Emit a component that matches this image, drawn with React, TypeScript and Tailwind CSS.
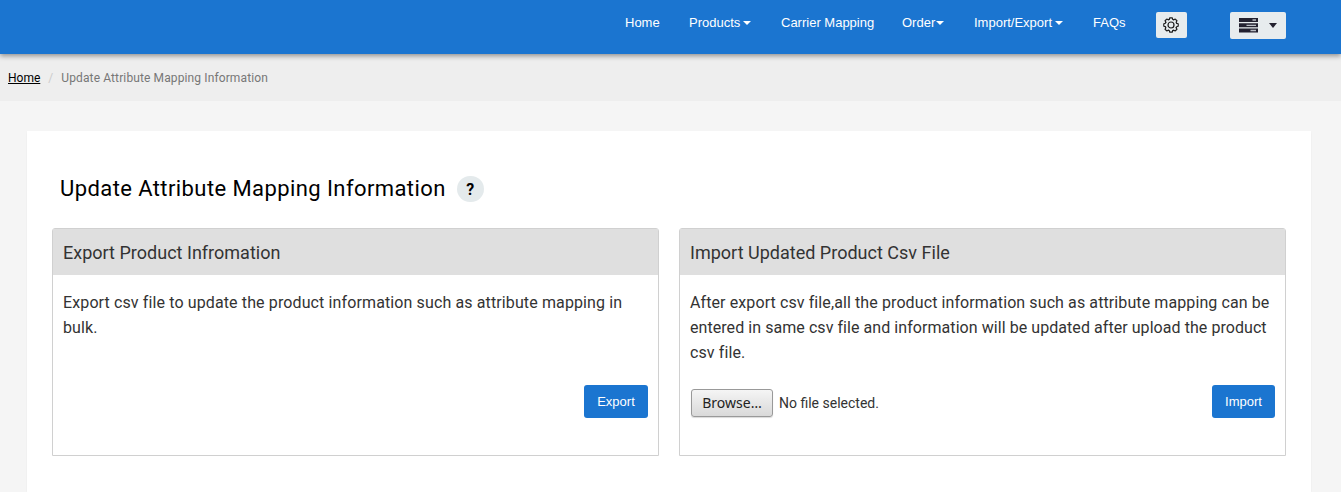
import React from "react";

const nav = [
  { t: "Home", w: "w-16", c: "" },
  { t: "Products", w: "w-[92px]", c: "ml-[3px]" },
  { t: "Carrier Mapping", w: "w-[121px]", c: "" },
  { t: "Order", w: "w-[72px]", c: "ml-px" },
  { t: "Import/Export", w: "w-[119px]", c: "ml-[3px]" },
  { t: "FAQs", w: "w-[63px]", c: "" },
];

function Caret({ gap }: { gap: string }) {
  return <span className={"mb-px inline-block border-x-4 border-t-4 border-x-transparent border-t-white align-middle " + gap} />;
}

function Gear() {
  return (
    <svg className="-ml-px" width="16" height="16" viewBox="0 0 16 16" fill="none" stroke="#1c1c1c" strokeWidth="1.2" strokeLinejoin="round" strokeLinecap="round">
      <circle cx="8" cy="8" r="3" />
      {[0, 45, 90, 135, 180, 225, 270, 315].map((a) => (
        <path key={a} d="M6.300 2.400L6.800.8h2.400l.5 1.600L10.700 2.800" transform={`rotate(${a} 8 8)`} />
      ))}
    </svg>
  );
}

function Server() {
  return (
    <svg width="19" height="15" viewBox="0 0 19 15">
      <path fill="#23212f" d="M0 0h19v4H0zM0 5.300h19v4H0zM0 10.600h19v4H0z" />
      <path stroke="#b9bdc3" strokeWidth="1.300" d="M13.500 2h3.500M7.500 7.300h9.500M11.500 12.500h5.500" />
    </svg>
  );
}

function Panel({ title, children }: { title: string; children: React.ReactNode }) {
  return (
    <section className="flex h-[228px] w-[607px] flex-col rounded-t-[3px] border border-[#d0d0d0] bg-white">
      <h2 className="h-[46px] bg-[#dfdfdf] px-2.5 text-[18px] leading-[48px] tracking-[0.01px]">{title}</h2>
      {children}
    </section>
  );
}

export default function App() {
  return (
    <div className="flex h-[492px] flex-col overflow-hidden bg-[#f5f5f5] font-[Roboto,sans-serif] text-[#333]">
      <header className="relative z-10 flex h-[54px] shrink-0 bg-[#1b75d0] pl-[625px] shadow-[0_2px_5px_rgba(0,0,0,0.4)]">
        <nav className="flex pt-[13px] font-['Liberation_Sans',sans-serif] text-[13px] leading-5 text-white">
          {nav.map((n) => (
            <a key={n.t} className={"shrink-0 whitespace-nowrap " + n.w}>{n.t}{n.c && <Caret gap={n.c} />}</a>
          ))}
        </nav>
        <button className="mt-3 flex h-[26px] w-[31px] items-center justify-center rounded-[2px] bg-[#e7ecee]"><Gear /></button>
        <button className="mt-3 ml-[43px] flex h-[27px] w-14 items-center rounded-[2px] bg-[#e7ecee] pl-[9px]">
          <Server />
          <span className="ml-[11px] border-x-4 border-t-[5px] border-x-transparent border-t-[#23212f]" />
        </button>
      </header>
      <div className="flex h-[47px] shrink-0 items-center bg-[#eee] pl-2 text-[12px]">
        <a className="text-black underline">Home</a>
        <span className="w-[21px] text-center text-[#ccc]">/</span>
        <span className="tracking-[0.12px] text-[#777]">Update Attribute Mapping Information</span>
      </div>
      <main className="mt-[30px] mr-[30px] ml-[27px] grow bg-white px-[25px] shadow-[0_1px_2px_rgba(0,0,0,0.05)]">
        <div className="flex h-[97px] items-center pt-[17px] pl-2">
          <h1 className="text-[22px] tracking-[0.41px] text-black">Update Attribute Mapping Information</h1>
          <span className="mt-px ml-[11px] flex h-[26px] w-[27px] items-center justify-center rounded-full bg-[#e4eaec] pt-[3px] text-[16px] font-bold text-black">?</span>
        </div>
        <div className="flex gap-5">
          <Panel title="Export Product Infromation">
            <p className="px-2.5 pt-[15px] text-[16px] leading-[25px] tracking-[0.12px]">Export csv file to update the product information such as attribute mapping in bulk.</p>
            <div className="mt-[45px] flex justify-end pr-2.5">
              <button className="h-[33px] w-16 rounded-[3px] bg-[#1b75d0] font-['Liberation_Sans',sans-serif] text-[13px] text-white">Export</button>
            </div>
          </Panel>
          <Panel title="Import Updated Product Csv File">
            <p className="pr-1 pl-2.5 pt-[15px] text-[16px] leading-[25px] tracking-[0.1px]">After export csv file,all the product information such as attribute mapping can be<br /><span className="tracking-[0.06px]">entered in same csv file and information will be updated after upload the product</span><br />csv file.</p>
            <div className="mt-5 flex pr-2.5 pl-[11px]">
              <button className="mt-1 h-7 w-[82px] rounded-[3px] border border-[#999] bg-linear-to-b from-[#f5f5f5] to-[#d9d9d9] pb-0.5 font-['Noto_Sans',sans-serif] text-[14px] text-[#222] shadow-[0_1px_1px_rgba(0,0,0,0.15)]">Browse…</button>
              <span className="mt-2 ml-1.5 text-[14px] leading-5">No file selected.</span>
              <button className="ml-auto h-[33px] w-[63px] rounded-[3px] bg-[#1b75d0] font-['Liberation_Sans',sans-serif] text-[13px] text-white">Import</button>
            </div>
          </Panel>
        </div>
      </main>
    </div>
  );
}
